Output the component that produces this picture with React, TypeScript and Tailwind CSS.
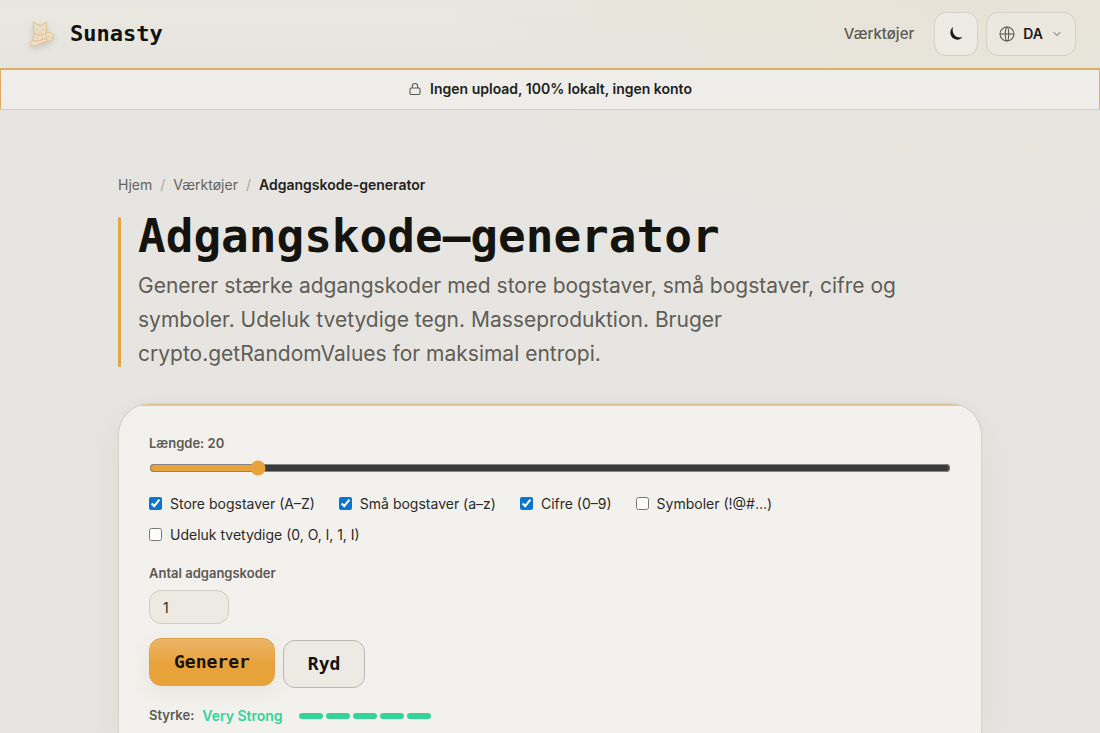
import { useState } from "react";
import { ChevronDown } from "lucide-react";

type OptionKey = "upper" | "lower" | "digits" | "symbols" | "ambiguous";

const OPTIONS: { key: OptionKey; label: string }[] = [
  { key: "upper", label: "Store bogstaver (A–Z)" },
  { key: "lower", label: "Små bogstaver (a–z)" },
  { key: "digits", label: "Cifre (0–9)" },
  { key: "symbols", label: "Symboler (!@#…)" },
  { key: "ambiguous", label: "Udeluk tvetydige (0, O, l, 1, I)" },
];

const STRENGTH_BARS = [1, 2, 3, 4, 5];

function CatLogo() {
  return (
    <svg viewBox="0 0 32 32" className="h-8 w-8 drop-shadow-md" fill="none" stroke="#e8bd84" strokeLinecap="round" strokeLinejoin="round" aria-hidden="true">
      <g fill="#eadfca">
        <path d="M21 16.500c2-3.500 8-2.500 8.500 1.500.3 3.500-3 5.500-7.500 5.500Z" />
        <path d="M10.500 15.500 9 22l3 4.500 8-1 3-4-2-6Z" />
        <path d="M9.500 4 9.300 12c.6 3 3.300 5 6.700 5s6.200-2 6.700-5L22.300 4 18.500 7h-5Z" />
        <path d="M8 22.500c-2 1.500-2.500 4-1 5s4 .3 6-.5l9-3c2-.8 1.500-3-.5-3-3 0-5 1.500-7.500 2Z" />
      </g>
      <path strokeWidth="0.800" d="M12 11.500l1.800.7M20 11.500l-1.800.7M15.200 14l.8.7.8-.7M13 17.500l.5 3M18.500 17.500l-.5 2.500M24 18.500c1.500-.5 3 .5 2.500 2" />
    </svg>
  );
}

function MoonIcon() {
  return (
    <svg viewBox="0 0 16 16" className="h-4 w-4" fill="#171713" aria-hidden="true">
      <path d="M5 1C1.300 4 1.600 10 5.600 12.600c3 1.900 7 1.200 8.900-1.500-3.600.9-6.800 0-8.500-2.600C4.500 6.200 4.300 3.500 5 1Z" />
    </svg>
  );
}

function GlobeIcon() {
  return (
    <svg viewBox="0 0 16 16" className="h-4 w-4" fill="none" stroke="#5c5a53" strokeWidth="1.100" aria-hidden="true">
      <circle cx="8" cy="8" r="7" />
      <ellipse cx="8" cy="8" rx="1.700" ry="7" />
      <path d="M1 8h14" />
    </svg>
  );
}

function LockIcon() {
  return (
    <svg viewBox="0 0 14 14" className="h-3.5 w-3.5" fill="none" stroke="#5c5a53" strokeWidth="1.100" aria-hidden="true">
      <rect x="2" y="6" width="10" height="6.500" rx="1.200" />
      <path d="M4.300 6V4.200a2.700 2.700 0 0 1 5.400 0V6" />
    </svg>
  );
}

export default function App() {
  const [length, setLength] = useState(20);
  const [count, setCount] = useState("1");
  const [checked, setChecked] = useState<Record<OptionKey, boolean>>({
    upper: true,
    lower: true,
    digits: true,
    symbols: false,
    ambiguous: false,
  });

  function toggle(key: OptionKey) {
    setChecked((c) => ({ ...c, [key]: !c[key] }));
  }

  return (
    <div className="min-h-screen bg-[#e6e5e1] bg-[radial-gradient(ellipse_520px_230px_at_88%_-10px,#e7e3d6,transparent),linear-gradient(#e8e7df,transparent_70px)] bg-no-repeat font-['Inter',sans-serif] text-[#2b2a26]">
      {/* Top bar */}
      <header className="flex h-[68px] items-center justify-between px-6">
        <a href="#" className="flex items-center gap-3.5">
          <CatLogo />
          <span className="font-['DejaVu_Sans_Mono',monospace] text-[22px] leading-8 font-bold text-[#12110d]">Sunasty</span>
        </a>
        <nav className="flex items-center gap-2">
          <a href="#" className="mr-3 text-[15px] font-medium text-[#5c5a53]">Værktøjer</a>
          <button aria-label="Skift tema" className="flex h-11 w-11 items-center justify-center rounded-xl border border-[#d3d0c7] bg-[#eeebe4]">
            <MoonIcon />
          </button>
          <button className="flex h-11 items-center gap-2 rounded-xl border border-[#d3d0c7] bg-[#ebe8e0] px-3 text-sm font-semibold text-[#1c1b17]">
            <GlobeIcon />
            DA
            <ChevronDown className="h-3 w-3 text-[#5c5a53]" />
          </button>
        </nav>
      </header>

      {/* Privacy banner */}
      <div className="flex h-[42px] items-center justify-center gap-2 border border-t-2 border-[#dcae66] border-b-[#cfcec9] bg-[#efede9] pb-0.5 text-sm font-semibold text-[#201f1b]">
        <LockIcon />
        Ingen upload, 100% lokalt, ingen konto
      </div>

      <main className="mx-auto max-w-[912px] px-6 pt-16">
        <nav aria-label="Brødkrumme" className="mb-[17px] flex gap-2 text-sm leading-[22px] text-[#66645d]">
          <a href="#">Hjem</a>
          <span className="text-[#aaa8a1]">/</span>
          <a href="#">Værktøjer</a>
          <span className="text-[#aaa8a1]">/</span>
          <span className="font-semibold text-[#23221e]">Adgangskode-generator</span>
        </nav>

        <div className="mb-8 flex gap-[17px]">
          <div className="my-1 w-[3px] shrink-0 rounded-sm bg-[#e4a545]" />
          <div>
            <h1 className="mb-2.5 font-['DejaVu_Sans_Mono',monospace] text-[46px] leading-[46px] font-bold text-[#14130e]">
              Adgangskode–generator
            </h1>
            <p className="max-w-[780px] text-[21px] leading-[34px] text-[#5f5d56]">
              Generer stærke adgangskoder med store bogstaver, små bogstaver, cifre og symboler. Udeluk tvetydige tegn. Masseproduktion. Bruger crypto.getRandomValues for maksimal entropi.
            </p>
          </div>
        </div>

        {/* Generator card */}
        <section className="relative overflow-hidden rounded-t-[32px] border border-b-0 border-[#d3d1cb] bg-[#f2f1ed] px-[30px] pt-[29px] pb-2 shadow-[0_12px_40px_rgba(60,50,30,0.06)]">
          <div className="absolute inset-x-0 top-0 h-0.5 bg-[#e3c595]" />
          <label htmlFor="length" className="block text-[13px] leading-5 font-semibold text-[#5c5a53]">
            Længde: {length}
          </label>
          <input
            id="length"
            type="range"
            min={4}
            max={128}
            value={length}
            onChange={(e) => setLength(Number(e.target.value))}
            className="mt-[7px] block h-4 w-full accent-[#e8a33d]"
          />

          <div className="mt-4 flex flex-wrap gap-x-6 gap-y-2">
            {OPTIONS.map((o) => (
              <label key={o.key} className="flex items-center gap-2 text-sm leading-[23px]">
                <input type="checkbox" checked={checked[o.key]} onChange={() => toggle(o.key)} className="h-[13px] w-[13px] accent-[#0a74d1]" />
                {o.label}
              </label>
            ))}
          </div>

          <label htmlFor="count" className="mt-[17px] block text-[13px] leading-5 font-semibold text-[#5c5a53]">
            Antal adgangskoder
          </label>
          <input
            id="count"
            type="text"
            inputMode="numeric"
            value={count}
            onChange={(e) => setCount(e.target.value)}
            className="mt-[7px] block h-[34px] w-20 rounded-xl border border-[#cfccc5] bg-[#edeae4] px-[13px] text-sm"
          />

          <div className="mt-3.5 flex items-start gap-2 font-['DejaVu_Sans_Mono',monospace] text-lg font-bold">
            <button className="h-12 rounded-xl border border-[#dfa24a] bg-linear-to-b from-[#ebb566] to-[#e8a23a] to-55% px-6 text-[#1a1205] shadow-[0_6px_20px_rgba(120,90,40,0.08)]">
              Generer
            </button>
            <button className="mt-0.5 h-12 rounded-xl border border-[#b9b6af] bg-[#edeae4] px-6 text-[#12110d]">Ryd</button>
          </div>

          <div className="mt-4 flex h-6 items-center text-[13px] font-semibold text-[#5c5a53]">
            Styrke:
            <span className="ml-2 text-sm text-[#35d399]">Very Strong</span>
            <div className="ml-4 flex gap-[3px]">
              {STRENGTH_BARS.map((n) => (
                <span key={n} className="h-1.5 w-6 rounded-full bg-[#35d399]" />
              ))}
            </div>
          </div>
        </section>
      </main>
    </div>
  );
}
